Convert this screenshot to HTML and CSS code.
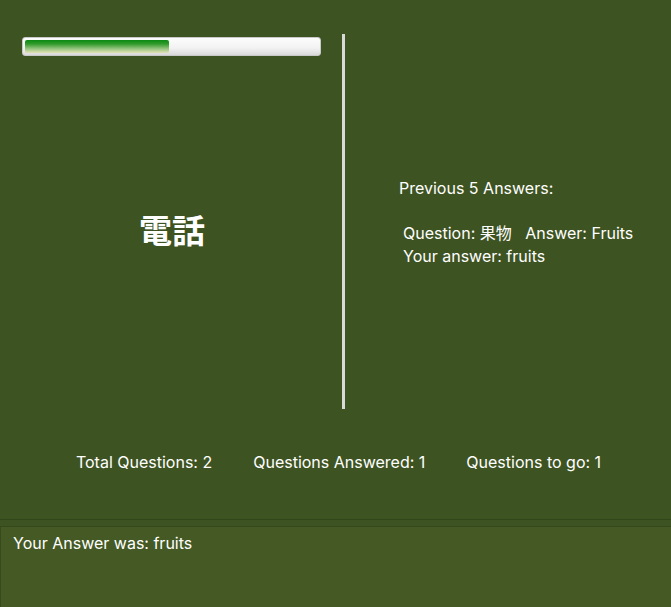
FILE: index.html
```html
<!DOCTYPE html>
<html>
<head>
<meta charset="utf-8">
<link rel="stylesheet" href="styles.css">
</head>
<body>
<div class="app">
  <div class="top">
    <div class="left">
      <div class="progress"><div class="fill" style="width:144px"></div></div>
      <div class="word">電話</div>
    </div>
    <div class="sep"></div>
    <div class="right">
      <div class="prev-title">Previous 5 Answers:</div>
      <div class="entry">
        <div>Question: 果物&nbsp;&nbsp; Answer: Fruits</div>
        <div>Your answer: fruits</div>
      </div>
    </div>
  </div>
  <div class="stats">
    <span>Total Questions: 2</span>
    <span>Questions Answered: 1</span>
    <span>Questions to go: 1</span>
  </div>
  <div class="rule"></div>
  <div class="answer">Your Answer was: fruits</div>
</div>
</body>
</html>
```
FILE: styles.css
```css
html, body {
  margin: 0;
  padding: 0;
}
body {
  background: #3e5322;
  color: #ffffff;
  font-family: Inter, "Noto Sans CJK JP", sans-serif;
  font-size: 16px;
  width: 671px;
  height: 607px;
  overflow: hidden;
}
.app {
  display: flex;
  flex-direction: column;
  height: 607px;
}
.top {
  display: flex;
  height: 410px;
}
.left {
  width: 342px;
  display: flex;
  flex-direction: column;
}
.progress {
  margin: 37px 0 0 22px;
  width: 293px;
  height: 13px;
  border: 1px solid #c9c9c9;
  border-radius: 3px;
  background: linear-gradient(#fdfdfd, #f2f2f2 60%, #d9d9d9);
  padding: 2px;
  box-sizing: content-box;
}
.fill {
  height: 13px;
  border-radius: 2px;
  background: linear-gradient(#0a8a12 0%, #2f9a2a 30%, #8fc27a 65%, #e6e2b8 100%);
}
.word {
  flex: 1;
  display: flex;
  align-items: center;
  justify-content: center;
  font-size: 33px;
  font-weight: bold;
  font-family: "Noto Sans CJK JP", sans-serif;
  padding-bottom: 8px;
  padding-left: 2px;
}
.sep {
  width: 3px;
  margin-top: 34px;
  height: 375px;
  background: #d9d9d9;
}
.right {
  flex: 1;
  padding: 177px 0 0 54px;
}
.prev-title {
  line-height: 22px;
}
.entry {
  margin-top: 23px;
  padding-left: 4px;
  line-height: 23px;
}
.stats {
  display: flex;
  justify-content: center;
  gap: 41px;
  margin-top: 41px;
  line-height: 22px;
  padding-left: 6px;
}
.rule {
  margin-top: 46px;
  height: 1px;
  background: #33461b;
  border-bottom: 6px solid #3e5322;
}
.answer {
  flex: 1;
  background: #445923;
  border-top: 1px solid #35481c;
  border-left: 1px solid #37491d;
  padding: 7px 12px;
  line-height: 19px;
}
```
